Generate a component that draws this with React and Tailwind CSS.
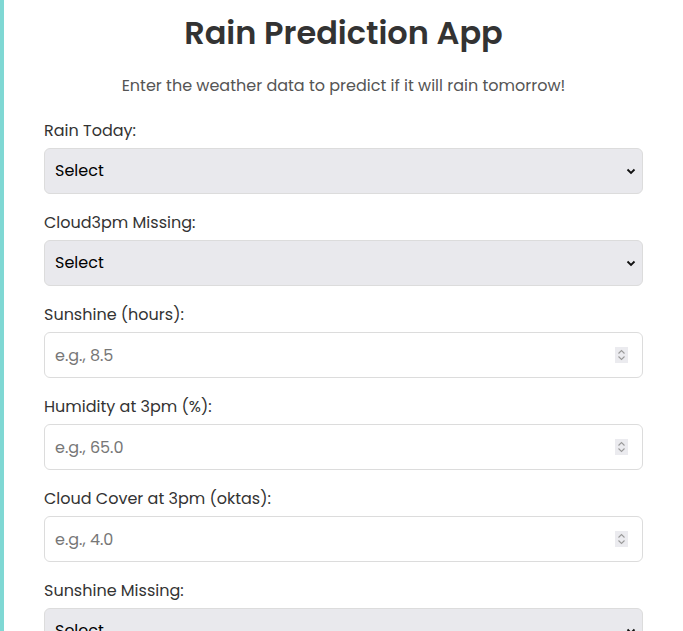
import React from 'react';

const FONT = { fontFamily: '"Poppins", "Inter", "Noto Sans", sans-serif' };

const fields = [
  { label: 'Rain Today:', kind: 'select' },
  { label: 'Cloud3pm Missing:', kind: 'select' },
  { label: 'Sunshine (hours):', kind: 'number', placeholder: 'e.g., 8.5' },
  { label: 'Humidity at 3pm (%):', kind: 'number', placeholder: 'e.g., 65.0' },
  { label: 'Cloud Cover at 3pm (oktas):', kind: 'number', placeholder: 'e.g., 4.0' },
  { label: 'Sunshine Missing:', kind: 'select' },
];

function SelectBox() {
  return (
    <div className="relative">
      <select className="w-full h-[46px] appearance-none rounded-md border border-[#dcdcdc] bg-[#e9e9ed] pl-[10px] pr-8 text-base text-black outline-none">
        <option>Select</option>
        <option>Yes</option>
        <option>No</option>
      </select>
      <svg className="pointer-events-none absolute right-[7px] top-1/2 -translate-y-1/2" width="10" height="8" viewBox="0 0 10 8">
        <path d="M1.5 2.5 L5 6 L8.5 2.5" fill="none" stroke="#111" strokeWidth="1.8" />
      </svg>
    </div>
  );
}

function NumberBox({ placeholder }) {
  return (
    <div className="relative">
      <input
        type="text"
        placeholder={placeholder}
        className="w-full h-[46px] rounded-md border border-[#dcdcdc] bg-white pl-[10px] pr-10 text-base text-black placeholder:text-[#777] outline-none"
      />
      <div className="pointer-events-none absolute right-[15px] top-1/2 -translate-y-1/2 flex h-[16px] w-[13px] items-center justify-center bg-[#ebebef]">
        <svg width="9" height="14" viewBox="0 0 9 14">
          <path d="M1.5 5.5 L4.5 2.5 L7.5 5.5" fill="none" stroke="#9a9a9a" strokeWidth="1.1" />
          <path d="M1.5 8.5 L4.5 11.5 L7.5 8.5" fill="none" stroke="#9a9a9a" strokeWidth="1.1" />
        </svg>
      </div>
    </div>
  );
}

export default function App() {
  return (
    <div className="flex min-h-screen bg-white" style={FONT}>
      <div className="w-1 shrink-0 bg-[#7fd8d4]" />
      <div className="flex-1 px-10 pt-[13px]">
        <h1 className="text-center text-[32px] font-semibold leading-[40px] text-[#333]">Rain Prediction App</h1>
        <p className="mt-[21px] text-center text-base text-[#555]">Enter the weather data to predict if it will rain tomorrow!</p>
        <div className="mt-[21px] flex flex-col gap-[17px]">
          {fields.map((f) => (
            <div key={f.label}>
              <label className="mb-[5px] block text-base leading-6 text-[#333]">{f.label}</label>
              {f.kind === 'select' ? <SelectBox /> : <NumberBox placeholder={f.placeholder} />}
            </div>
          ))}
        </div>
      </div>
    </div>
  );
}
